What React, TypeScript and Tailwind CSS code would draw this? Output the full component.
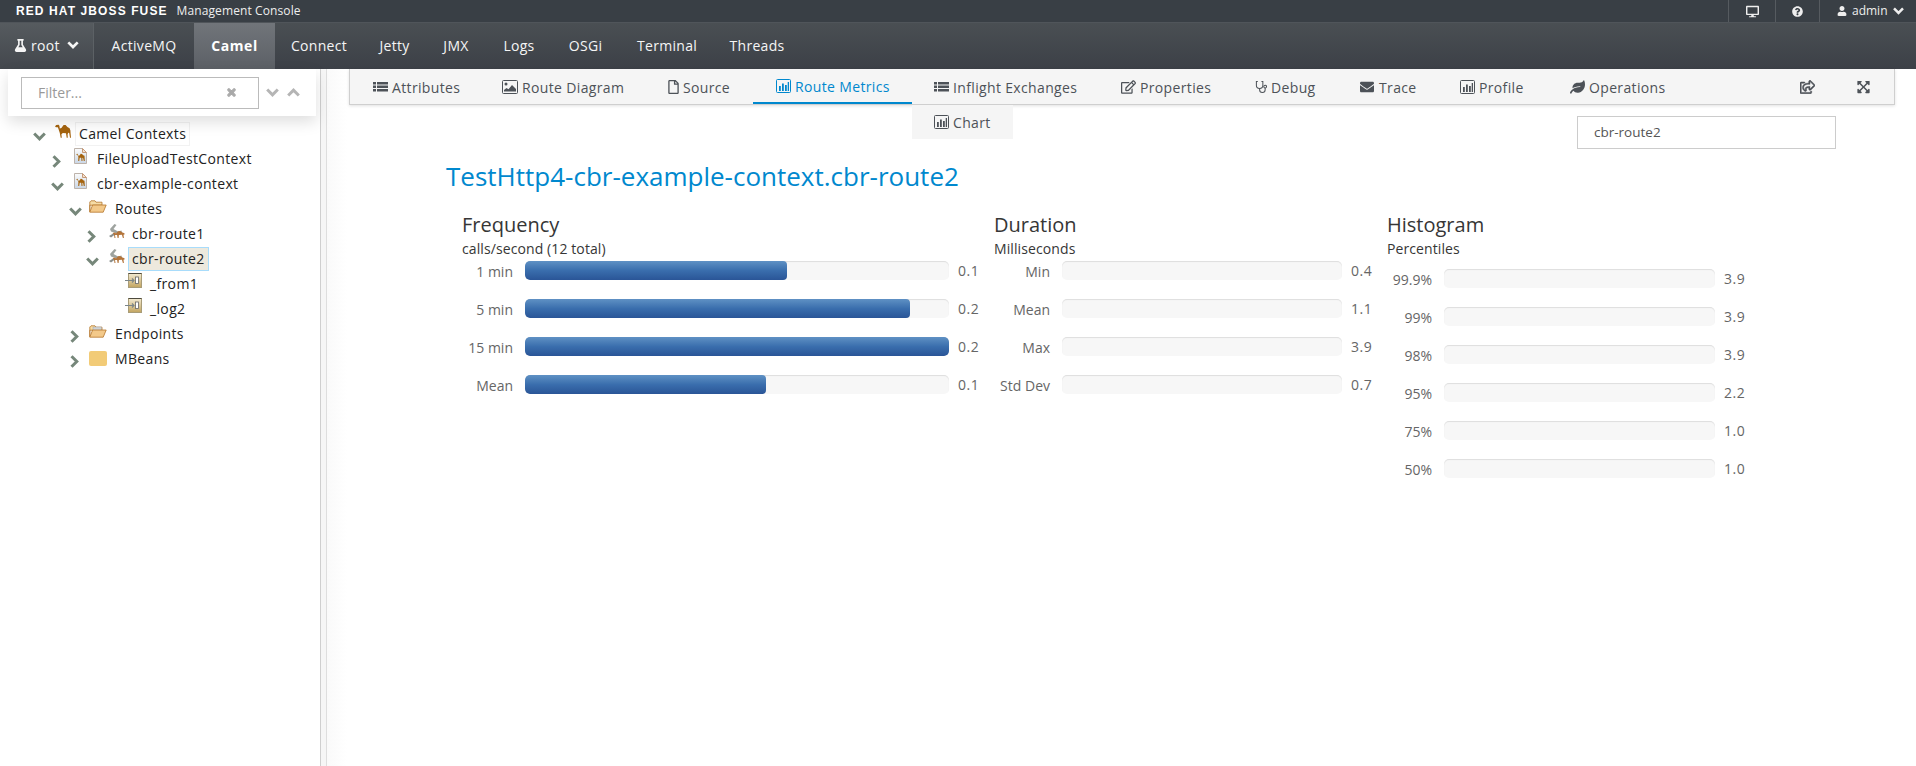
import React from 'react';
import { FaDesktop, FaEnvelope, FaExpandArrowsAlt, FaFlask, FaLeaf, FaQuestionCircle, FaRegEdit, FaRegFile, FaRegShareSquare, FaTimes, FaUser } from 'react-icons/fa';

const navItems = [
  { label: 'ActiveMQ', cls: 'w-[100px]' },
  { label: 'Camel', cls: 'w-[81px]', active: true },
  { label: 'Connect', cls: 'w-[88px]' },
  { label: 'Jetty', cls: 'w-[63px]' },
  { label: 'JMX', cls: 'w-[60px]' },
  { label: 'Logs', cls: 'w-[66px]' },
  { label: 'OSGi', cls: 'w-[67px]' },
  { label: 'Terminal', cls: 'w-[96px]' },
  { label: 'Threads', cls: 'w-[84px]' },
];

function ListIcon() {
  return (
    <svg viewBox="0 0 15 12" className="w-[15px] h-[12px] shrink-0" fill="currentColor">
      <path d="M0 0h3v2.500H0zM4 0h11v2.500H4zM0 3.500h3V6H0zM4 3.500h11V6H4zM0 7h3v2.500H0zM4 7h11v2.500H4z" transform="translate(0 1)" />
    </svg>
  );
}

function ChartIcon() {
  return (
    <svg viewBox="0 0 15 14" className="w-[15px] h-[14px] shrink-0">
      <rect x="0.500" y="0.500" width="14" height="13" rx="1" fill="none" stroke="currentColor" />
      <path fill="currentColor" d="M3 7h1.800v5H3zM6 4.500h1.800V12H6zM9 6h1.800v6H9zM11.700 3h1.300v9h-1.300z" />
    </svg>
  );
}

function ImageIcon() {
  return (
    <svg viewBox="0 0 16 14" className="w-[16px] h-[14px] shrink-0">
      <rect x="0.500" y="0.500" width="15" height="13" rx="1" fill="none" stroke="currentColor" />
      <circle cx="4" cy="4" r="1.500" fill="currentColor" />
      <path fill="currentColor" d="M2 11.500V10l2.500-2 2 1.300L10 5l4 4v2.500z" />
    </svg>
  );
}

function StethoscopeIcon() {
  return (
    <svg viewBox="0 0 13 14" className="w-[12px] h-[14px] shrink-0" fill="none" stroke="currentColor" strokeWidth="1.100">
      <path d="M3 1H1.500v4a3.500 3.500 0 0 0 7 0V1H7" />
      <path d="M5 8.500V10a3 3 0 0 0 6 0V8" />
      <circle cx="11" cy="6.500" r="1.500" />
    </svg>
  );
}

function SourceIcon() {
  return <FaRegFile className="w-[11px] h-[14px] shrink-0" />;
}

const tabs = [
  { label: 'Attributes', icon: <ListIcon />, cls: 'w-[129px] pl-[23px]' },
  { label: 'Route Diagram', icon: <ImageIcon />, cls: 'w-[166px] pl-[23px]' },
  { label: 'Source', icon: <SourceIcon />, cls: 'w-[108px] pl-[23px]' },
  { label: 'Route Metrics', icon: <ChartIcon />, cls: 'w-[159px] pl-[23px]', active: true },
  { label: 'Inflight Exchanges', icon: <ListIcon />, cls: 'w-[209px] pl-[22px]' },
  { label: 'Properties', icon: <FaRegEdit className="w-[15px] h-[14px] shrink-0" />, cls: 'w-[134px]' },
  { label: 'Debug', icon: <StethoscopeIcon />, cls: 'w-[104px]' },
  { label: 'Trace', icon: <FaEnvelope className="w-[16px] h-[14px] shrink-0" />, cls: 'w-[101px]' },
  { label: 'Profile', icon: <ChartIcon />, cls: 'w-[110px]' },
  { label: 'Operations', icon: <FaLeaf className="w-[15px] h-[14px] shrink-0" />, cls: 'w-[120px]' },
];

function ChevronDown({ className }: { className?: string }) {
  return (
    <svg viewBox="0 0 13 9" className={className} fill="none" stroke="currentColor" strokeWidth="3">
      <path d="M1.200 1.500 6.500 6.800 11.800 1.500" />
    </svg>
  );
}

function ChevronUp({ className }: { className?: string }) {
  return (
    <svg viewBox="0 0 13 9" className={className} fill="none" stroke="currentColor" strokeWidth="3">
      <path d="M1.200 7.500 6.500 2.200 11.800 7.500" />
    </svg>
  );
}

function Camel() {
  return (
    <svg viewBox="0 0 17 14" className="w-[17px] h-[14px]">
      <path
        fill="#a5640f"
        d="M0 2.400 1.200 1 3.600.8 4.400 1.800 4.800 4.400 6.400 4 8.600 1 10.600 1 12.400 3 14.600 4.200 15.400 6.500 15.600 9.500 16 13.800 15 13.800 14.200 9 13.200 8.800 12.600 10.400 12.800 13.800 11.700 13.800 11 9.200 7.800 9 6.400 10.200 6.800 13.800 5.700 13.800 4.800 9 3.500 5 2.800 3.200 1 3.300Z"
      />
    </svg>
  );
}

function ContextIcon() {
  return (
    <svg viewBox="0 0 13 16" className="w-[13px] h-[16px] ml-[1px]">
      <defs>
        <linearGradient id="pg" x1="0" y1="0" x2="0" y2="1">
          <stop offset="0" stopColor="#fbfbfb" />
          <stop offset="1" stopColor="#c9d6e6" />
        </linearGradient>
      </defs>
      <path fill="url(#pg)" stroke="#bdb3ab" d="M.5.5h8l4 4v11H.5z" />
      <path fill="#f3e2cf" stroke="#c79a78" d="M8.500.5v4h4z" />
      <path
        fill="#a5640f"
        d="M2 6.200 3.500 5.800 4.300 7.800 5.500 7.500 6.800 5.800 8 6l1.200 1.200 1.300.6.300 5.200h-1L9 9.800l-.6.2.1 3h-1l-.3-3.200H5.700L5.200 13h-1l.2-4.200L3.400 7z"
      />
    </svg>
  );
}

function OpenFolder({ page }: { page?: boolean }) {
  return (
    <svg viewBox="0 0 18 13" className="w-[18px] h-[13px] -ml-[2px]">
      <path fill="#f6dca6" stroke="#b5762c" strokeWidth="0.8" d="M.8 11.800V2L2 .8h4l1 1.400h6v3H.8z" />
      {page && <path fill="#cfd3d6" stroke="#999" strokeWidth="0.4" d="M4 2h8.500v3.500H4z" />}
      <path fill="#f3c98a" stroke="#b5762c" strokeWidth="0.8" d="M.8 12.200 3.600 5h13.600l-3 7.200z" />
    </svg>
  );
}

function RouteIcon() {
  return (
    <svg viewBox="0 0 16 15" className="w-[16px] h-[15px] ml-[1px]">
      <path fill="#9ea39f" d="M1 5 5.500 0 7.500 1 4.500 5 9 7.500 12.500 6.500 13 8.500 8 9.500 2 7.500z" />
      <path fill="#8a8f8c" d="M0 12l5-3 1 1.500-4 3z" />
      <path
        fill="#b3743a"
        d="M3.500 9 6 8.500l1 1 2-2.300 2-.2 2.500 1.500 2 .7V10.500l-1 .3.400 3.200h-1l-1-3.200-3 .2-.3 3h-1l-.5-3L6 11l.5 3h-1L5 10.500z"
      />
    </svg>
  );
}

function EndpointIcon() {
  return (
    <svg viewBox="0 0 17 15" className="w-[17px] h-[15px] -ml-[1px]">
      <defs>
        <linearGradient id="ep" x1="0" y1="0" x2="0" y2="1">
          <stop offset="0" stopColor="#f2ead2" />
          <stop offset="1" stopColor="#c2a45f" />
        </linearGradient>
      </defs>
      <rect x="3.500" y="0.500" width="13" height="14" fill="url(#ep)" stroke="#a89c78" />
      <path stroke="#4d4a3e" d="M3.500 .5h13" />
      <rect x="10.500" y="4" width="3" height="6.500" fill="#fff" stroke="#666" strokeWidth="0.8" />
      <path fill="none" stroke="#7b8588" strokeWidth="1.100" d="M0 7.500h9M7 5.500l2 2-2 2" />
    </svg>
  );
}

function Toggle({ open }: { open?: boolean }) {
  return open ? (
    <ChevronDown className="w-[13px] h-[9px] text-[#76877a]" />
  ) : (
    <svg viewBox="0 0 9 13" className="w-[9px] h-[13px] ml-[1px] text-[#76877a]" fill="none" stroke="currentColor" strokeWidth="3">
      <path d="M1.500 1.200 6.800 6.500 1.500 11.800" />
    </svg>
  );
}

function TreeRow({
  depth,
  toggle,
  icon,
  label,
  selected,
  focused,
  iconPad = 'pb-[5px]',
}: {
  depth: string;
  toggle?: 'open' | 'closed';
  icon: React.ReactNode;
  label: string;
  selected?: boolean;
  focused?: boolean;
  iconPad?: string;
}) {
  return (
    <div className={`flex items-center h-[25px] ${depth}`}>
      <div className="w-[24px] pl-[2px] pt-[5px] shrink-0 flex items-center">{toggle && <Toggle open={toggle === 'open'} />}</div>
      <div className={`w-[20px] shrink-0 flex items-center ${iconPad}`}>{icon}</div>
      <span
        className={`h-[24px] leading-[22px] px-[3px] border text-[14px] tracking-[0.35px] text-[#222] ${
          selected ? 'bg-[#ede9dd] border-[#a8dcfb]' : focused ? 'border-[#f2f2f2]' : 'border-transparent'
        }`}
      >
        {label}
      </span>
    </div>
  );
}

function Bar({ label, value, pct, labelW, trackW }: { label: string; value: string; pct: number; labelW: string; trackW: string }) {
  return (
    <div className="flex items-start h-[38px]">
      <div className={`${labelW} text-right text-[14px] leading-[20px] pt-[1px] text-[#666] shrink-0`}>{label}</div>
      <div className={`${trackW} h-[19px] ml-[12px] rounded-[5px] bg-[#f7f7f7] shadow-[inset_0_1px_1px_rgba(0,0,0,0.1)] overflow-hidden shrink-0`}>
        {pct > 0 && (
          <div className="h-full rounded-[4px] bg-gradient-to-b from-[#5f91c4] via-[#3a6ead] to-[#2a5597]" style={{ width: `${pct}%` }} />
        )}
      </div>
      <div className="ml-[9px] pt-[1px] text-[14px] leading-[18px] text-[#666] tracking-[0.5px]">{value}</div>
    </div>
  );
}

function Metric({
  title,
  sub,
  rows,
  width,
  labelW,
  trackW,
  rowsTop,
}: {
  title: string;
  sub: string;
  rows: [string, string, number][];
  width: string;
  labelW: string;
  trackW: string;
  rowsTop: string;
}) {
  return (
    <div className={`${width} shrink-0`}>
      <h3 className="text-[20px] leading-[26px] text-[#363636] pl-[1px] pt-[1px]">{title}</h3>
      <div className="text-[14px] tracking-[0.1px] leading-[20px] text-[#363636] mt-[1px] pl-[1px]">{sub}</div>
      <div className={rowsTop}>
        {rows.map(([label, value, pct]) => (
          <Bar key={label} label={label} value={value} pct={pct} labelW={labelW} trackW={trackW} />
        ))}
      </div>
    </div>
  );
}

export default function App() {
  return (
    <div className="w-[1916px] h-[766px] overflow-hidden bg-white font-['Open_Sans',sans-serif] flex flex-col">
      <header className="h-[22px] bg-[#393f45] flex items-center justify-between text-white shrink-0">
        <div className="flex items-center pl-[16px]">
          <span className="font-['Liberation_Sans',sans-serif] font-bold text-[12px] tracking-[1.1px]">RED HAT JBOSS FUSE</span>
          <span className="ml-[9px] text-[12px] tracking-[0.1px] text-[#eee]">Management Console</span>
        </div>
        <div className="flex h-full text-[#eee]">
          <div className="w-[47px] border-l border-[#565b60] flex items-center justify-center">
            <FaDesktop className="w-[13px] h-[13px]" />
          </div>
          <div className="w-[44px] border-l border-[#565b60] flex items-center justify-center">
            <FaQuestionCircle className="w-[11px] h-[11px]" />
          </div>
          <div className="w-[97px] border-l border-[#565b60] flex items-center pl-[17px] gap-[5px] text-[12px]">
            <FaUser className="w-[10px] h-[10px]" />
            <span>admin</span>
            <ChevronDown className="w-[11px] h-[8px]" />
          </div>
        </div>
      </header>

      <nav className="h-[47px] shrink-0 flex items-stretch text-[#f5f5f5] text-[14px] tracking-[0.3px] border-t border-[#50555a] bg-gradient-to-b from-[#4a4f53] to-[#3c4047]">
        <div className="w-[94px] flex items-center pl-[14px] gap-[4px] pb-[2px] border-r border-[#5c6165] bg-gradient-to-b from-[#565b5f] to-[#43474d]">
          <FaFlask className="w-[13px] h-[13px]" />
          <span>root</span>
          <ChevronDown className="w-[12px] h-[8px] ml-[3px]" />
        </div>
        {navItems.map(item => (
          <div
            key={item.label}
            className={`${item.cls} flex items-center justify-center pb-[2px] ${
              item.active ? 'font-bold tracking-[0.6px] text-white bg-gradient-to-b from-[#71757a] to-[#5c6066]' : ''
            }`}
          >
            {item.label}
          </div>
        ))}
      </nav>

      <div className="flex-1 flex min-h-0">
        <aside className="w-[321px] shrink-0 border-r border-[#cfcfcf] relative">
          <div className="absolute left-[8px] top-0 w-[308px] h-[47px] bg-white shadow-[0_6px_14px_rgba(0,0,0,0.13)] flex items-center pl-[13px] z-10">
            <div className="w-[238px] h-[32px] border border-[#bbb] flex items-center justify-between pl-[16px] pr-[21px] text-[14px] text-[#999]">
              <span>Filter...</span>
              <FaTimes className="w-[11px] h-[11px] text-[#a9a9a9] stroke-[50px]" />
            </div>
            <ChevronDown className="w-[13px] h-[9px] ml-[7px] text-[#b5b5b5]" />
            <ChevronUp className="w-[13px] h-[9px] ml-[8px] text-[#b5b5b5]" />
          </div>
          <div className="pt-[52px]">
            <TreeRow depth="pl-[31px]" toggle="open" icon={<Camel />} label="Camel Contexts" focused iconPad="pb-[6px]" />
            <TreeRow depth="pl-[49px]" toggle="closed" icon={<ContextIcon />} label="FileUploadTestContext" />
            <TreeRow depth="pl-[49px]" toggle="open" icon={<ContextIcon />} label="cbr-example-context" />
            <TreeRow depth="pl-[67px]" toggle="open" icon={<OpenFolder />} label="Routes" iconPad="pb-[4px]" />
            <TreeRow depth="pl-[84px]" toggle="closed" icon={<RouteIcon />} label="cbr-route1" />
            <TreeRow depth="pl-[84px]" toggle="open" icon={<RouteIcon />} label="cbr-route2" selected />
            <TreeRow depth="pl-[102px]" icon={<EndpointIcon />} label="_from1" iconPad="pb-[7px]" />
            <TreeRow depth="pl-[102px]" icon={<EndpointIcon />} label="_log2" iconPad="pb-[7px]" />
            <TreeRow depth="pl-[67px]" toggle="closed" icon={<OpenFolder page />} label="Endpoints" iconPad="pb-[4px]" />
            <TreeRow
              depth="pl-[67px]"
              toggle="closed"
              icon={<div className="w-[18px] h-[15px] -ml-[2px] rounded-[2px] bg-[#f2cb77]" />}
              label="MBeans"
              iconPad="pb-0"
            />
          </div>
        </aside>

        <div className="w-[6px] shrink-0 bg-[#f6f6f6] border-r border-[#dedede]" />

        <main className="flex-1 min-w-0 relative pl-[22px] pr-[21px] bg-gradient-to-r from-[#fafafa] to-white to-[20px]">
          <div className="h-[36px] bg-[#f5f5f5] border-l border-r border-b border-[#cfcfcf] shadow-[0_1px_3px_rgba(0,0,0,0.12)] flex items-stretch text-[14px] tracking-[0.35px] text-[#4d5258]">
            {tabs.map(({ label, icon, cls, active }) => (
              <div
                key={label}
                className={`${cls} flex items-center gap-[4px] pt-[1px] whitespace-nowrap ${
                  active ? 'text-[#0088ce] border-b-2 border-[#0088ce]' : ''
                }`}
              >
                {icon}
                <span>{label}</span>
              </div>
            ))}
            <div className="flex-1 flex items-center justify-end pt-[1px]">
              <FaRegShareSquare className="w-[15px] h-[14px] stroke-[20px]" />
              <FaExpandArrowsAlt className="w-[13px] h-[14px] ml-[42px] mr-[24px]" />
            </div>
          </div>

          <div className="absolute left-[585px] top-[36px] w-[101px] h-[34px] bg-[#f5f5f5] flex items-center gap-[4px] pl-[22px] text-[14px] tracking-[0.35px] text-[#4d5258]">
            <ChartIcon />
            <span>Chart</span>
          </div>

          <div className="flex justify-end pt-[11px] pr-[59px]">
            <div className="w-[259px] h-[33px] border border-[#ccc] flex items-center pl-[16px] text-[13.5px] text-[#555]">cbr-route2</div>
          </div>

          <h2 className="text-[26px] leading-[34px] text-[#0088ce] mt-[10px] pl-[97px]">TestHttp4-cbr-example-context.cbr-route2</h2>

          <div className="flex pl-[112px] mt-[18px]">
            <Metric
              title="Frequency"
              sub="calls/second (12 total)"
              width="w-[532px]"
              labelW="w-[52px]"
              trackW="w-[424px]"
              rowsTop="mt-[2px]"
              rows={[
                ['1 min', '0.1', 61.8],
                ['5 min', '0.2', 90.8],
                ['15 min', '0.2', 100],
                ['Mean', '0.1', 56.8],
              ]}
            />
            <Metric
              title="Duration"
              sub="Milliseconds"
              width="w-[393px]"
              labelW="w-[57px]"
              trackW="w-[280px]"
              rowsTop="mt-[2px]"
              rows={[
                ['Min', '0.4', 0],
                ['Mean', '1.1', 0],
                ['Max', '3.9', 0],
                ['Std Dev', '0.7', 0],
              ]}
            />
            <Metric
              title="Histogram"
              sub="Percentiles"
              width="w-[400px]"
              labelW="w-[46px]"
              trackW="w-[271px]"
              rowsTop="mt-[10px]"
              rows={[
                ['99.9%', '3.9', 0],
                ['99%', '3.9', 0],
                ['98%', '3.9', 0],
                ['95%', '2.2', 0],
                ['75%', '1.0', 0],
                ['50%', '1.0', 0],
              ]}
            />
          </div>
        </main>
      </div>
    </div>
  );
}
